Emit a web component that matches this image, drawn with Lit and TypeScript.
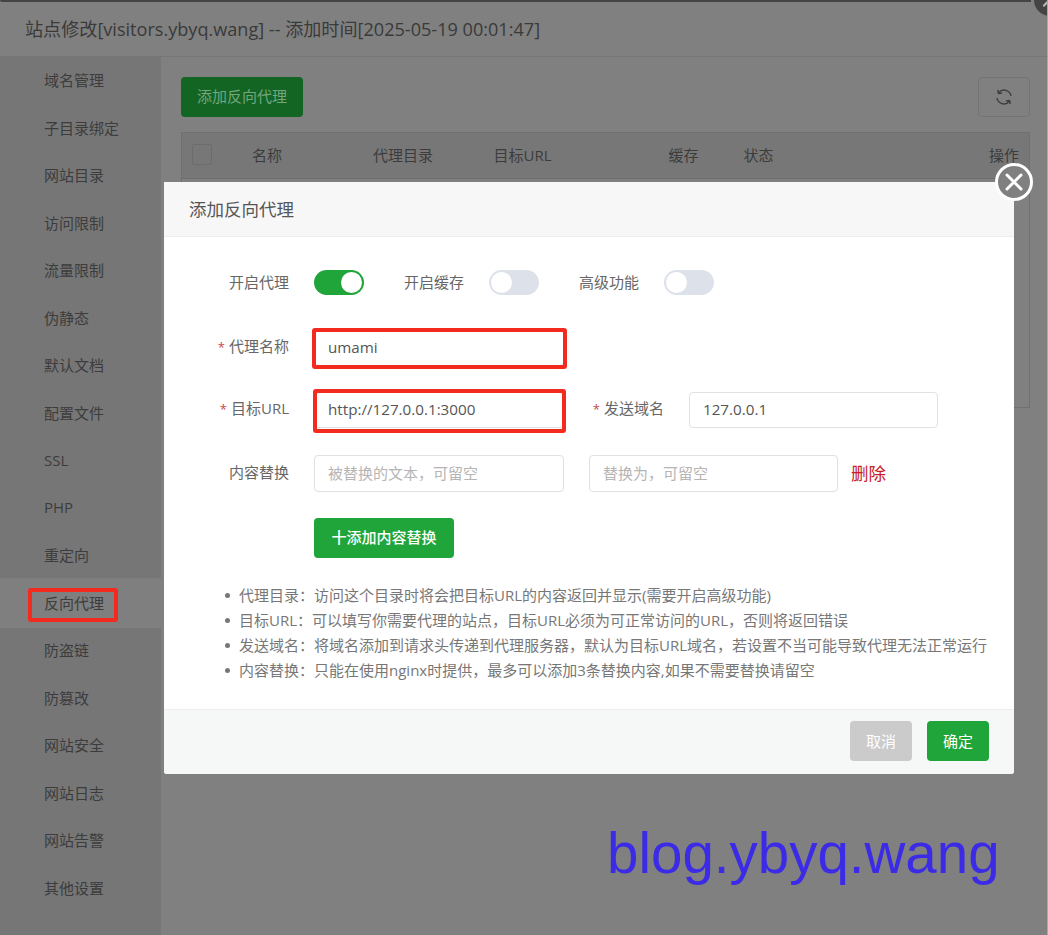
import { LitElement, html, css } from "lit";
import { customElement } from "lit/decorators.js";

const NAV = ["域名管理","子目录绑定","网站目录","访问限制","流量限制","伪静态","默认文档","配置文件","SSL","PHP","重定向","反向代理","防盗链","防篡改","网站安全","网站日志","网站告警","其他设置"];
const HINTS = [
  "代理目录：访问这个目录时将会把目标URL的内容返回并显示(需要开启高级功能)",
  "目标URL：可以填写你需要代理的站点，目标URL必须为可正常访问的URL，否则将返回错误",
  "发送域名：将域名添加到请求头传递到代理服务器，默认为目标URL域名，若设置不当可能导致代理无法正常运行",
  "内容替换：只能在使用nginx时提供，最多可以添加3条替换内容,如果不需要替换请留空",
];

@customElement("app-root")
export class AppRoot extends LitElement {
  static styles = css`
    :host { display: block; font-family: "Open Sans", "Noto Sans CJK SC", sans-serif; }
    *, *::before, *::after { box-sizing: border-box; }
    .page { position: relative; width: 1048px; height: 935px; overflow: hidden; background: #808080; display: flex; flex-direction: column; color: #3b3b3b; font-size: 15px; }
    .topline { position: absolute; left: 0; top: 0; width: 1031px; height: 2px; background: #444; border-radius: 0 0 0 2px; }
    .layer-close { position: absolute; left: 1034px; top: -16px; width: 32px; height: 32px; border-radius: 50%; background: #444; overflow: hidden; }
    .layer-close::after { content: ""; position: absolute; left: 8px; top: 18px; width: 9px; height: 2px; background: #bbb; transform: rotate(-45deg); }
    .edge { position: absolute; right: 0; top: 0; width: 1px; height: 100%; background: #a8a8a8; }
    .title { height: 57px; flex: none; display: flex; align-items: center; padding: 0 0 0 25px; font-size: 18.1px; color: #3a3a3a; border-bottom: 1px solid #777; }
    .content { flex: 1; display: flex; min-height: 0; }
    .nav { width: 161px; flex: none; background: #767676; display: flex; flex-direction: column; }
    .nav-item { height: 47.5px; flex: none; display: flex; align-items: center; padding: 0 0 2px 44px; color: #3c3c3c; }
    .nav-item.on { background: #7f7f7f; height: 50px; margin: -1.25px 0; position: relative; }
    .nav-item.on::after { content: ""; position: absolute; left: 28px; top: 10px; width: 90px; height: 34px; border: 4px solid #f32a1e; border-radius: 3px; }
    .main { flex: 1; padding: 20px 18px 0 20px; }
    .toolbar { display: flex; justify-content: space-between; margin-bottom: 15px; }
    .add { width: 122px; height: 40px; background: #126523; color: #74a67e; border-radius: 4px; display: flex; align-items: center; justify-content: center; padding-bottom: 3px; }
    .refresh { width: 52px; height: 40px; border: 1px solid #747474; border-radius: 4px; display: flex; align-items: center; justify-content: center; }
    .table { height: 276px; border: 1px solid #707070; }
    .thead { height: 46px; background: #777; border-bottom: 1px solid #6e6e6e; display: grid; grid-template-columns: 70px 121px 120.5px 175px 75px 1fr auto; align-items: center; padding: 0 10px 2px 0; color: #3c3c3c; }
    .check-cell { padding-left: 10px; }
    .check { width: 20px; height: 21px; border: 1px solid #6c6c6c; border-radius: 2px; display: block; }

    .modal { position: absolute; left: 164px; top: 182px; width: 850px; height: 592px; background: #fff; border-radius: 3px; display: flex; flex-direction: column; color: #666; }
    .m-head { height: 55px; flex: none; background: #f7f7f7; border-bottom: 1px solid #ececec; padding: 0 0 2px 25px; display: flex; align-items: center; font-size: 17.5px; color: #555; }
    .close { position: absolute; left: 831px; top: -19px; width: 38px; height: 38px; border-radius: 50%; background: #808080; border: 3px solid #fff; display: flex; align-items: center; justify-content: center; }
    .m-body { flex: 1; padding: 33px 0 0; }
    .row { display: flex; align-items: center; }
    .label { width: 125px; flex: none; text-align: right; margin-right: 25px; margin-top: -5px; }
    .label.auto { width: 60px; margin-left: 40px; }
    .label.second { width: 100px; }
    .req { color: #c8484a; margin-right: 4px; font-size: 13px; }
    .sw { width: 50px; height: 25px; border-radius: 13px; background: #dde1e9; position: relative; flex: none; }
    .sw::after { content: ""; position: absolute; left: 2px; top: 2px; width: 21px; height: 21px; border-radius: 50%; background: #fff; }
    .sw.on { background: #20a53a; }
    .sw.on::after { left: 27px; }
    .switches { height: 25px; margin-bottom: 35px; }
    .switches .label { margin-top: -2px; }
    .input { width: 250px; height: 36px; border: 1px solid #dfe1e4; border-radius: 4px; padding: 0 13px 2px; display: flex; align-items: center; color: #555; flex: none; position: relative; font-size: 15.2px; }
    .ph { color: #b5b5b5; font-size: 15px; }
    .tall { height: 37px; }
    .gap26 { margin-bottom: 26px; }
    .gap27 { margin-bottom: 27px; }
    .mark::after { content: ""; position: absolute; border: 4.5px solid #f32a1e; border-radius: 3px; }
    .mark1::after { left: -3px; top: -3px; width: 255px; height: 41px; }
    .mark2::after { left: -2px; top: -4px; width: 253px; height: 44px; }
    .second-input { margin-left: 0; width: 249px; }
    .gap25 { margin-left: 25px; }
    .del { margin-left: 13px; color: #c62026; font-size: 17.5px; margin-top: -3px; }
    .add-rule { margin-left: 150px; width: 140px; height: 40px; border-radius: 4px; background: #20a53a; color: #fff; display: flex; align-items: center; justify-content: center; font-weight: 500; padding-bottom: 3px; }
    .hints { list-style: none; margin: 25px 0 0; padding: 0 0 0 61px; }
    .hints li { height: 25px; line-height: 25px; position: relative; padding-left: 14px; color: #777; white-space: nowrap; }
    .hints li::before { content: ""; position: absolute; left: 0; top: 10px; width: 5px; height: 5px; border-radius: 50%; background: #777; }
    .m-foot { height: 65px; flex: none; background: #f6f8f8; border-top: 1px solid #eeeeee; display: flex; justify-content: flex-end; align-items: flex-start; padding: 11px 25px 0 0; gap: 15px; border-radius: 0 0 3px 3px; }
    .btn { width: 62px; height: 40px; border-radius: 4px; color: #fff; display: flex; align-items: center; justify-content: center; background: #20a53a; font-size: 15px; padding-bottom: 2px; }
    .btn.off { background: #cbcbcb; }
    .wm { position: absolute; left: 607px; top: 822px; font-family: "Liberation Sans", sans-serif; font-size: 56.5px; line-height: 64px; color: #3b2ae6; white-space: nowrap; }
  `;

  render() {
    return html`<div class="page">
      <div class="title">站点修改[visitors.ybyq.wang] -- 添加时间[2025-05-19 00:01:47]</div>
      <div class="content">
        <div class="nav">
          ${NAV.map((n) => html`<div class="nav-item ${n === "反向代理" ? "on" : ""}">${n}</div>`)}
        </div>
        <div class="main">
          <div class="toolbar">
            <div class="add">添加反向代理</div>
            <div class="refresh">
              <svg width="18" height="18" viewBox="0 0 18 18" fill="none" stroke="#3c3c3c" stroke-width="1.4">
                <path d="M16 8A7 7 0 0 0 3.8 4.5" />
                <path d="M2.8 1.8L3.4 5.5L7 5" />
                <path d="M2 10A7 7 0 0 0 14.2 13.5" />
                <path d="M15.2 16.2L14.6 12.5L11 13" />
              </svg>
            </div>
          </div>
          <div class="table">
            <div class="thead">
              <div class="check-cell"><span class="check"></span></div>
              <div>名称</div><div>代理目录</div><div>目标URL</div><div>缓存</div><div>状态</div><div>操作</div>
            </div>
          </div>
        </div>
      </div>

      <div class="topline"></div>
      <div class="layer-close"></div>
      <div class="edge"></div>

      <div class="modal">
        <div class="m-head">添加反向代理</div>
        <div class="close">
          <svg width="20" height="20" viewBox="0 0 20 20" stroke="#fff" stroke-width="3" stroke-linecap="round"><path d="M3 3l14 14M17 3L3 17" /></svg>
        </div>
        <div class="m-body">
          <div class="row switches">
            <div class="label">开启代理</div><div class="sw on"></div>
            <div class="label auto">开启缓存</div><div class="sw"></div>
            <div class="label auto">高级功能</div><div class="sw"></div>
          </div>
          <div class="row gap26">
            <div class="label"><span class="req">*</span>代理名称</div>
            <div class="input mark mark1">umami</div>
          </div>
          <div class="row gap27">
            <div class="label"><span class="req">*</span>目标URL</div>
            <div class="input mark mark2">http://127.0.0.1:3000</div>
            <div class="label second"><span class="req">*</span>发送域名</div>
            <div class="input second-input">127.0.0.1</div>
          </div>
          <div class="row gap26">
            <div class="label">内容替换</div>
            <div class="input tall ph">被替换的文本，可留空</div>
            <div class="input tall ph gap25 second-input">替换为，可留空</div>
            <div class="del">删除</div>
          </div>
          <div class="add-rule">十添加内容替换</div>
          <ul class="hints">${HINTS.map((h) => html`<li>${h}</li>`)}</ul>
        </div>
        <div class="m-foot">
          <div class="btn off">取消</div>
          <div class="btn">确定</div>
        </div>
      </div>

      <div class="wm">blog.ybyq.wang</div>
    </div>`;
  }
}
